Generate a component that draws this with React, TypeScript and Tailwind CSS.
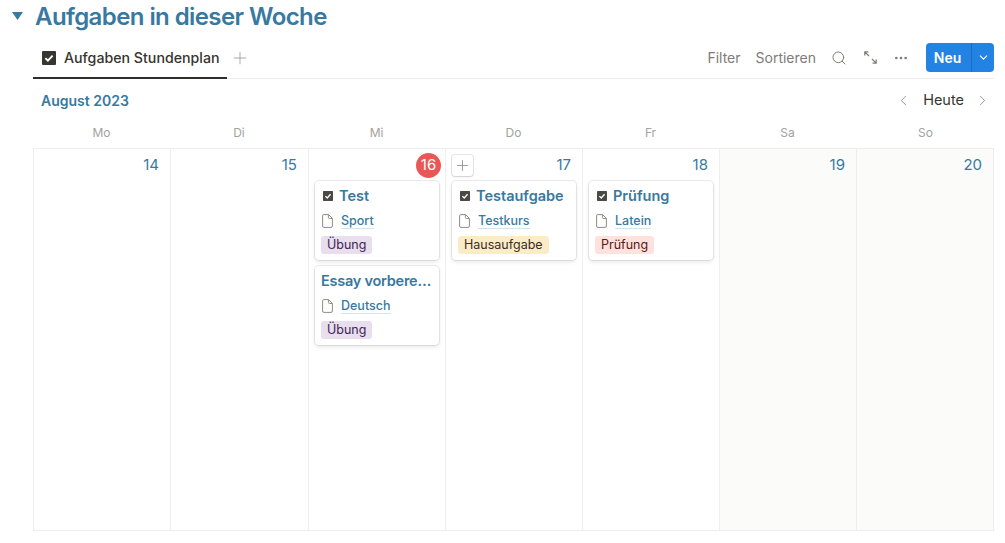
import { Search, Plus, ChevronLeft, ChevronRight, ChevronDown, MoreHorizontal } from 'lucide-react';

type Task = {
    title: string;
    course: string;
    tag: string;
    tagClass: string;
    check: boolean;
};

type Day = {
    label: string;
    num: number;
    weekend?: boolean;
    today?: boolean;
    hover?: boolean;
    tasks: Task[];
};

const purple = 'bg-[#e8deee] text-[#412454]';

const days: Day[] = [
    { label: 'Mo', num: 14, tasks: [] },
    { label: 'Di', num: 15, tasks: [] },
    {
        label: 'Mi',
        num: 16,
        today: true,
        tasks: [
            { title: 'Test', course: 'Sport', tag: 'Übung', tagClass: purple, check: true },
            { title: 'Essay vorbere…', course: 'Deutsch', tag: 'Übung', tagClass: purple, check: false },
        ],
    },
    {
        label: 'Do',
        num: 17,
        hover: true,
        tasks: [
            { title: 'Testaufgabe', course: 'Testkurs', tag: 'Hausaufgabe', tagClass: 'bg-[#fbecc8] text-[#402c1b]', check: true },
        ],
    },
    {
        label: 'Fr',
        num: 18,
        tasks: [
            { title: 'Prüfung', course: 'Latein', tag: 'Prüfung', tagClass: 'bg-[#ffe2dd] text-[#5d1715]', check: true },
        ],
    },
    { label: 'Sa', num: 19, weekend: true, tasks: [] },
    { label: 'So', num: 20, weekend: true, tasks: [] },
];

function CheckBox({ size, fill }: { size: number; fill: string }) {
    return (
        <svg width={size} height={size} viewBox="0 0 14 14" className="shrink-0">
            <rect width="14" height="14" rx="1" fill={fill} />
            <path d="M3.4 7.2 L5.9 9.7 L10.6 4.6" fill="none" stroke="#fff" strokeWidth="1.9" />
        </svg>
    );
}

function PageIcon() {
    return (
        <svg width="11" height="14" viewBox="0 0 11 14" className="shrink-0">
            <path
                d="M1.8 .6 H6.6 L10.4 4.4 V12 Q10.4 13.4 9 13.4 H2 Q.6 13.4 .6 12 V1.8 Q.6 .6 1.8 .6 Z M6.4 .8 V3.4 Q6.4 4.5 7.5 4.5 H10.2"
                fill="none"
                stroke="#8d8c88"
                strokeWidth="1"
            />
        </svg>
    );
}

function ExpandIcon() {
    return (
        <svg width="13" height="13" viewBox="0 0 13 13" className="ml-[17px] shrink-0">
            <path
                d="M.8 4.4 V.8 H4.4 M.8 .8 L5 5 M12.2 8.6 V12.2 H8.6 M12.2 12.2 L8 8"
                fill="none"
                stroke="#7d7c78"
                strokeWidth="1.2"
            />
        </svg>
    );
}

function TaskCard({ task }: { task: Task }) {
    return (
        <div className="flex h-[79px] w-[124px] flex-col rounded-[4px] bg-white px-[6px] shadow-[0_0_0_1px_rgba(15,15,15,0.08),0_2px_4px_rgba(15,15,15,0.1)]">
            <div className={`flex h-[29px] items-center gap-[6px] pt-[1px] ${task.check ? 'pl-[2px]' : 'pl-0'}`}>
                {task.check && <CheckBox size={10} fill="#4a4946" />}
                <span
                    className={`whitespace-nowrap text-[14.5px] font-semibold text-[#37799f] ${
                        task.check ? '' : 'tracking-[-0.25px]'
                    }`}
                >
                    {task.title}
                </span>
            </div>
            <div className="flex h-[21px] items-center gap-[8px] pl-[1px]">
                <PageIcon />
                <span className="border-b border-[#d5e2ea] text-[12.5px] font-medium leading-[15px] text-[#37799f]">
                    {task.course}
                </span>
            </div>
            <div className="mt-[5px] flex">
                <span className={`rounded-[3px] px-[6px] text-[12.5px] leading-[18px] ${task.tagClass}`}>{task.tag}</span>
            </div>
        </div>
    );
}

function DayCell({ day }: { day: Day }) {
    return (
        <div
            className={`flex min-w-0 flex-col border-r border-[#eeeeed] last:border-r-0 ${
                day.weekend ? 'bg-[#fbfbfa]' : 'bg-white'
            }`}
        >
            <div className="flex h-[32px] items-center justify-between pl-[6px] pr-[11px] pt-[1px]">
                {day.hover ? (
                    <span className="flex h-[21px] w-[21px] items-center justify-center rounded-[3px] bg-white text-[#8d8c88] shadow-[0_0_0_1px_rgba(15,15,15,0.1),0_1px_2px_rgba(15,15,15,0.1)]">
                        <Plus size={17} strokeWidth={1.2} />
                    </span>
                ) : (
                    <span />
                )}
                {day.today ? (
                    <span className="-mr-[7px] flex h-[25px] w-[25px] items-center justify-center rounded-full bg-[#eb5757] text-[15px] text-white">
                        {day.num}
                    </span>
                ) : (
                    <span className="text-[15px] text-[#37799f]">{day.num}</span>
                )}
            </div>
            <div className="flex flex-col items-center gap-[6px]">
                {day.tasks.map((t) => (
                    <TaskCard key={t.title} task={t} />
                ))}
            </div>
        </div>
    );
}

export default function App() {
    return (
        <div className="h-[543px] w-[1005px] overflow-hidden bg-white font-['Inter',sans-serif] text-[#37352f]">
            <div className="flex h-[33px] items-center pl-[12px]">
                <svg width="11" height="8" viewBox="0 0 11 8" className="-mt-[1px]">
                    <path d="M0 0 H11 L5.5 8 Z" fill="#37799f" />
                </svg>
                <h1 className="ml-[12px] text-[24px] font-semibold leading-[33px] tracking-[-0.58px] text-[#37799f]">
                    Aufgaben in dieser Woche
                </h1>
            </div>

            <div className="ml-[33px] mr-[11px]">
                <div className="mt-[5px] flex h-[41px] items-center justify-between border-b border-[#ededec]">
                    <div className="flex h-full items-center">
                        <div className="flex h-[41px] w-[194px] items-center gap-[8px] border-b-2 border-[#2f2e2b] pl-[9px] pt-[1px]">
                            <CheckBox size={14} fill="#373530" />
                            <span className="text-[14.2px] font-medium text-[#37352f]">Aufgaben Stundenplan</span>
                        </div>
                        <Plus size={20} strokeWidth={1} className="ml-[3px] text-[#9b9a97]" />
                    </div>
                    <div className="-mt-[1px] flex items-center text-[14px] text-[#7d7c78]">
                        <span>Filter</span>
                        <span className="ml-[15px]">Sortieren</span>
                        <Search size={16} strokeWidth={1.5} className="ml-[15px]" />
                        <ExpandIcon />
                        <MoreHorizontal size={16} strokeWidth={2} className="ml-[16px]" />
                        <div className="ml-[17px] flex h-[29px] w-[68px] items-center rounded-[4px] bg-[#2383e2] text-white">
                            <span className="flex h-full w-[45px] items-center justify-center pr-[2px] text-[14px] font-semibold">Neu</span>
                            <span className="flex h-full flex-1 items-center justify-center border-l border-[#1b6fc2]">
                                <ChevronDown size={13} strokeWidth={2} />
                            </span>
                        </div>
                    </div>
                </div>

                <div className="flex h-[42px] items-center justify-between pl-[8px] pr-[3px]">
                    <span className="text-[14px] font-semibold text-[#37799f]">August 2023</span>
                    <div className="flex items-center text-[14.5px] text-[#37352f]">
                        <ChevronLeft size={17} strokeWidth={1} className="text-[#6f6e69]" />
                        <span className="ml-[11px]">Heute</span>
                        <ChevronRight size={17} strokeWidth={1} className="ml-[10px] text-[#6f6e69]" />
                    </div>
                </div>

                <div className="grid h-[28px] grid-cols-[137px_138px_137px_137px_137px_137px_136px] border-b border-[#ededec]">
                    {days.map((d) => (
                        <div key={d.label} className="flex items-center justify-center pb-[4px] text-[12px] text-[#a3a29e] last:pl-[3px]">
                            {d.label}
                        </div>
                    ))}
                </div>

                <div className="grid h-[382px] grid-cols-[137px_138px_137px_137px_137px_137px_136px] border-x border-b border-[#ededec]">
                    {days.map((d) => (
                        <DayCell key={d.num} day={d} />
                    ))}
                </div>
            </div>
        </div>
    );
}
